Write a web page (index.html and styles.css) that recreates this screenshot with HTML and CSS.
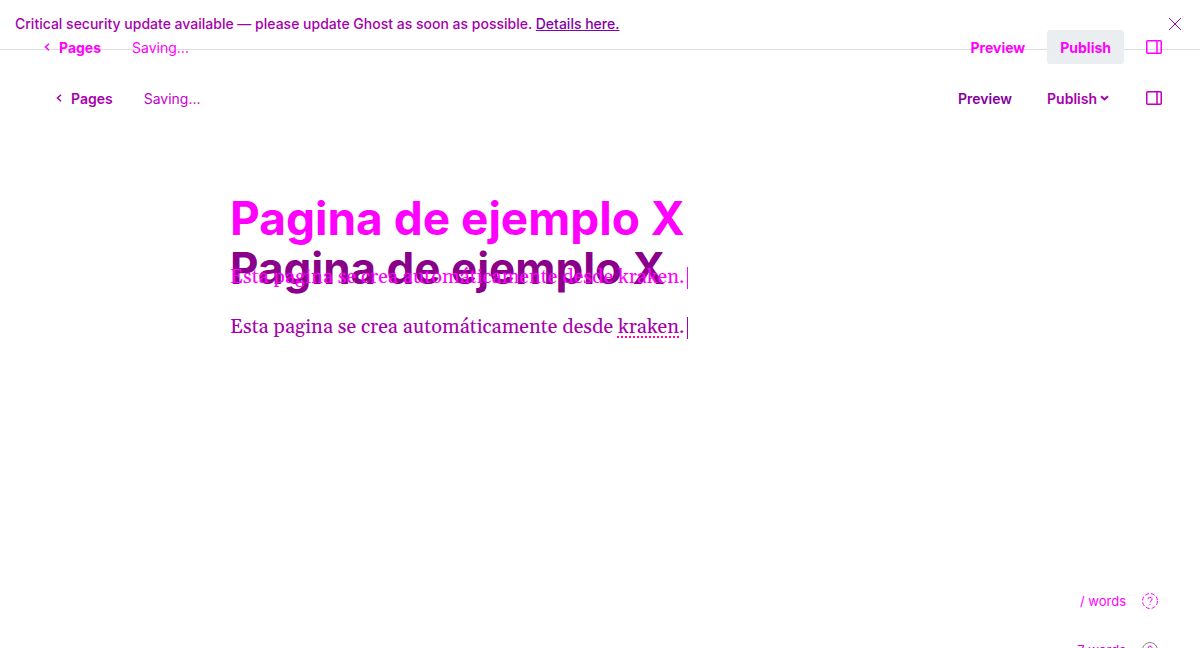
FILE: index.html
```html
<!DOCTYPE html>
<html lang="es">
<head>
<meta charset="utf-8">
<title>Pagina de ejemplo X</title>
<link rel="stylesheet" href="styles.css">
</head>
<body>
<div class="stage">
  <div class="layer layer-after">
    <aside class="banner">
      <p class="banner-text">Critical security update available — please update Ghost as soon as possible. <a class="banner-link" href="#">Details here.</a></p>
      <button class="icon-button banner-close" aria-label="Close"><svg width="14" height="14" viewBox="0 0 14 14"><path d="M1 1l12 12M13 1L1 13"/></svg></button>
    </aside>
    <section class="editor">
      <header class="toolbar">
        <a class="back" href="#"><svg width="6" height="8" viewBox="0 0 6 8"><path d="M5 .8L1.500 4 5 7.200"/></svg>Pages</a>
        <span class="status">Saving...</span>
        <button class="text-button preview">Preview</button>
        <button class="text-button publish">Publish<svg width="9" height="6" viewBox="0 0 9 6"><path d="M1 1.200L4.500 4.500 8 1.200"/></svg></button>
        <button class="icon-button panel" aria-label="Settings"><svg width="16" height="14" viewBox="0 0 16 14"><rect x=".75" y=".75" width="14.500" height="12.500" rx="1"/><path d="M11 1v12"/></svg></button>
      </header>
      <main class="document">
        <h1 class="title">Pagina de ejemplo X</h1>
        <p class="body-text">Esta pagina se crea automáticamente desde <span class="misspelled">kraken</span>.<span class="caret"></span></p>
      </main>
      <footer class="footer"><span>7 words</span><button class="icon-button" aria-label="Help"><svg width="16" height="16" viewBox="0 0 16 16"><circle class="help-ring" cx="8" cy="8" r="7.500"/><path d="M6 6.200a2 2 0 1 1 3 1.700c-.8.500-1 .8-1 1.600M8 11v1"/></svg></button></footer>
    </section>
  </div>
  <div class="layer layer-before">
    <section class="editor">
      <header class="toolbar">
        <a class="back" href="#"><svg width="6" height="8" viewBox="0 0 6 8"><path d="M5 .8L1.500 4 5 7.200"/></svg>Pages</a>
        <span class="status">Saving...</span>
        <button class="text-button preview">Preview</button>
        <button class="text-button publish">Publish</button>
        <button class="icon-button panel" aria-label="Settings"><svg width="16" height="14" viewBox="0 0 16 14"><rect x=".75" y=".75" width="14.500" height="12.500" rx="1"/><path d="M11 1v12"/></svg></button>
      </header>
      <main class="document">
        <h1 class="title">Pagina de ejemplo X</h1>
        <p class="body-text">Esta pagina se crea automáticamente desde kraken.<span class="caret"></span></p>
      </main>
      <footer class="footer"><span>/ words</span><button class="icon-button" aria-label="Help"><svg width="16" height="16" viewBox="0 0 16 16"><circle class="help-ring" cx="8" cy="8" r="7.500"/><path d="M6 6.200a2 2 0 1 1 3 1.700c-.8.500-1 .8-1 1.600M8 11v1"/></svg></button></footer>
    </section>
  </div>
</div>
</body>
</html>
```
FILE: styles.css
```css
* { box-sizing: border-box; }
body { margin: 0; background: #fff; font-family: Inter, sans-serif; font-size: 14px; }
h1, p { margin: 0; }
button { border: 0; padding: 0; background: none; color: inherit; font: inherit; cursor: pointer; }
a { color: inherit; text-decoration: none; }
svg { display: block; fill: none; stroke: currentColor; stroke-width: 1.5; }

.stage { position: relative; height: 100vh; overflow: hidden; }
.layer-after { color: #a600ad; }
.layer-before { position: absolute; inset: 0; color: #f0f; }

.banner { display: flex; align-items: center; justify-content: space-between; height: 50px; padding: 0 18px 2px 15px; border-bottom: 1px solid #ddd; font-weight: 500; }
.banner-link { color: #8500a8; text-decoration: underline; }
.banner-close svg { stroke-width: 1; }

.editor { display: flex; flex-direction: column; height: 100vh; }
.toolbar { display: flex; align-items: center; flex: none; height: 96px; padding: 0 38px 0 56px; font-weight: 600; }
.layer-before .toolbar { height: 94px; padding-left: 44px; font-weight: 700; }
.back { display: flex; align-items: center; gap: 9px; }
.status { margin: 0 auto 0 31px; color: #c400cb; font-weight: 400; }
.layer-before .status { color: #f0f; }
.preview { color: #8500a0; }
.layer-before .preview { color: #f0f; }
.publish { display: flex; align-items: center; gap: 3px; height: 34px; margin: 0 37px 0 35px; }
.publish svg { stroke-width: 2; }
.layer-before .publish { margin: 0 22px; padding: 0 13px; border-radius: 3px; background: #ebeef0; }
.panel { color: #b800bd; }
.layer-before .panel { color: #f0f; }

.document { flex: 1; width: 100%; max-width: 740px; margin: 0 auto; padding: 94px 0 0; }
.layer-before .document { padding-top: 96px; }
.title { color: #8a008a; font-size: 44px; line-height: 56px; font-weight: 700; }
.layer-before .title { color: #f0f; font-size: 46px; }
.body-text { margin-top: 15px; font-family: Georgia, Gelasio, "Liberation Serif", serif; font-size: 20px; line-height: 32px; }
.misspelled { text-decoration: underline dotted #f0a 2px; text-underline-offset: 3px; }
.caret { display: inline-block; width: 1px; height: 22px; margin-left: 2px; background: currentColor; vertical-align: middle; }

.footer { display: flex; align-items: center; justify-content: flex-end; flex: none; gap: 16px; height: 96px; padding: 0 42px 0 0; color: #cf00d6; font-size: 13px; }
.layer-before .footer { height: 94px; color: #f0f; }
.footer svg { stroke-width: 1; }
.layer-after .help-ring { stroke: #888; }
.layer-before .help-ring { stroke-dasharray: 4 2; }
```
